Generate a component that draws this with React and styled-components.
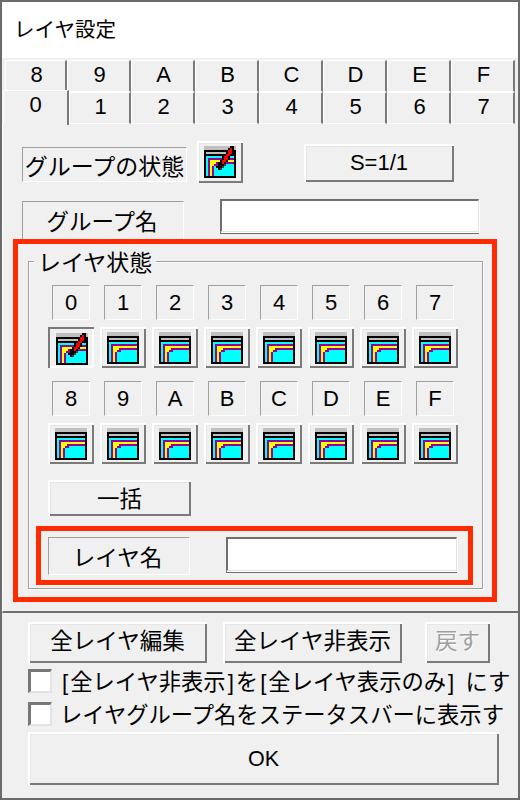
import React from "react";
import styled, { createGlobalStyle, css } from "styled-components";

const Global = createGlobalStyle`
  html, body { margin: 0; padding: 0; background: #6b6b6b; }
  * { box-sizing: border-box; }
`;

const raised = css`
  background: #f0f0f0;
  box-shadow: inset 2px 2px 0 #fff, inset -2px -2px 0 #7a7a7a, inset 3px 3px 0 #e6e6e6;
`;
const pressedEdge = css`
  background: #f0f0f0;
  box-shadow: inset 2px 2px 0 #7a7a7a, inset -2px -2px 0 #fff;
`;
const thinSunken = css`
  background: #f0f0f0;
  border-top: 1px solid #a0a0a0;
  border-left: 1px solid #a0a0a0;
  border-right: 1px solid #fff;
  border-bottom: 1px solid #fff;
`;
const centered = css`
  display: flex;
  align-items: center;
  justify-content: center;
`;

const Screen = styled.div`
  width: 520px;
  height: 800px;
  padding: 2px;
  overflow: hidden;
  font-family: "Liberation Sans", "Noto Sans CJK JP", sans-serif;
  font-size: 22.5px;
  color: #000;
  background: #6b6b6b;
`;
const Win = styled.div`
  width: 516px;
  height: 796px;
  background: #f0f0f0;
`;
const TitleBar = styled.div`
  height: 56px;
  background: #fff;
  padding: 14px 0 0 12px;
  font-size: 20.5px;
  line-height: 28px;
`;
const TabRow = styled.div`
  display: flex;
  height: 32px;
  padding-left: ${(p) => p.$indent}px;
  margin-top: ${(p) => p.$top}px;
`;
const Tab = styled.div`
  ${centered}
  position: relative;
  flex: none;
  width: ${(p) => p.$w}px;
  height: 32px;
  padding: 0 0 2px 2px;
  font-size: 22px;
  background: #f0f0f0;
  border-top: 1px solid #fff;
  border-left: 1px solid #fff;
  border-right: 2px solid #7a7a7a;
  border-bottom: 1px solid #fff;
  ${(p) =>
    p.$active &&
    css`
      z-index: 1;
      height: 35px;
      margin-top: -2px;
      padding: 0 0 6px 0;
      border-bottom: none;
    `}
`;
const Pane = styled.div`
  border-left: 1px solid #fff;
  border-bottom: 2px solid #6f6f6f;
  height: 489px;
  padding-top: 17px;
`;
const TopRow = styled.div`
  display: flex;
  align-items: flex-start;
  padding-left: 19px;
`;
const NameRow = styled(TopRow)`
  margin-top: 16px;
  height: 40px;
`;
const StateLabel = styled.div`
  ${thinSunken}
  ${centered}
  width: 165px;
  height: 35px;
  margin-top: 6px;
  white-space: nowrap;
  font-size: 23px;
`;
const GroupNameLabel = styled.div`
  ${thinSunken}
  ${centered}
  width: 162px;
  height: 38px;
  margin-top: 2px;
  padding: 0 2px 2px 0;
  border-bottom: none;
`;
const IconButton = styled.div`
  ${(p) => (p.$pressed ? pressedEdge : raised)}
  flex: none;
  width: 46px;
  height: 41px;
  padding: ${(p) => (p.$pressed ? "6px 0 0 8px" : "5px 0 0 7px")};
  svg { display: block; }
`;
const GroupIconButton = styled(IconButton)`
  margin-left: 10px;
  height: 42px;
`;
const ScaleButton = styled.div`
  ${raised}
  ${centered}
  width: 150px;
  height: 38px;
  margin: 3px 0 0 61px;
  font-size: 22px;
`;
const TextField = styled.div`
  flex: none;
  width: ${(p) => p.$w}px;
  height: ${(p) => p.$h}px;
  margin-left: 36px;
  background: #fff;
  border-top: 2px solid #6f6f6f;
  border-left: 2px solid #6f6f6f;
  border-right: 1px solid #e3e3e3;
  border-bottom: 1px solid #e3e3e3;
  box-shadow: 1px 1px 0 #fff, 0 2px 0 #6f6f6f;
`;
const RedBox = styled.div`
  border: 5px solid #ff2a00;
  width: ${(p) => p.$w}px;
`;
const OuterRed = styled(RedBox)`
  margin-left: 10px;
  height: 363px;
  padding: 17px 0 0 10px;
`;
const Field = styled.div`
  position: relative;
  width: 455px;
  height: 328px;
  padding: 23px 0 0 7px;
  border: 1px solid #a0a0a0;
  box-shadow: inset 1px 1px 0 #fff, 1px 1px 0 #fff;
`;
const Legend = styled.div`
  position: absolute;
  top: -12px;
  left: 5px;
  padding: 0 4px;
  background: #f0f0f0;
  line-height: 26px;
  font-size: 23px;
`;
const LayerGrid = styled.div`
  display: grid;
  grid-template-columns: repeat(8, 46px);
  column-gap: 6px;
  margin-left: 12px;
  & + & { margin-top: 13px; }
`;
const CellLabel = styled.div`
  ${thinSunken}
  ${centered}
  width: 38px;
  height: 35px;
  margin: 0 auto 7px;
  font-size: 22px;
`;
const BulkButton = styled.div`
  ${raised}
  ${centered}
  width: 143px;
  height: 36px;
  margin: 16px 0 0 12px;
  padding-bottom: 3px;
`;
const InnerRed = styled(RedBox)`
  display: flex;
  align-items: flex-start;
  height: 59px;
  margin-top: 10px;
  padding: 6px 0 0 7px;
`;
const LayerNameLabel = styled.div`
  ${thinSunken}
  ${centered}
  flex: none;
  width: 142px;
  height: 38px;
  padding-right: 3px;
`;
const Footer = styled.div`
  padding: 9px 0 0 26px;
`;
const ButtonRow = styled.div`
  display: flex;
  margin-bottom: 6px;
`;
const FootButton = styled.div`
  ${raised}
  ${centered}
  flex: none;
  width: ${(p) => p.$w}px;
  height: 41px;
  margin-right: ${(p) => p.$gap}px;
  padding-bottom: 8px;
  white-space: nowrap;
  ${(p) =>
    p.$disabled &&
    css`
      color: #a0a0a0;
      text-shadow: 1px 1px 0 #fff;
    `}
`;
const CheckRow = styled.div`
  display: flex;
  align-items: center;
  height: 24px;
  margin-bottom: ${(p) => p.$gap}px;
  white-space: nowrap;
  font-size: 22.3px;
  word-spacing: 3px;
`;
const CheckText = styled.span`
  margin-top: -3px;
`;
const Bracket = styled.span`
  padding: 0 2px;
`;
const CheckBox = styled.div`
  flex: none;
  width: 24px;
  height: 24px;
  margin-right: 8px;
  background: #fff;
  border-top: 3px solid #777;
  border-left: 3px solid #777;
  border-right: 2px solid #e3e3e3;
  border-bottom: 2px solid #e3e3e3;
`;
const OkButton = styled.div`
  ${raised}
  ${centered}
  width: 471px;
  height: 53px;
  padding-top: 2px;
  font-size: 21.5px;
`;

const COLORS = {
  g: "#c0c0c0",
  k: "#000",
  c: "#00ffff",
  p: "#990099",
  y: "#ffff00",
  r: "#ff0000",
  d: "#404040",
};
const BASE = [
  "gggggggggggggggg",
  "gggggggggggggggg",
  "kkkkkkkkkkkkkkkk",
  "kggggggggggggggk",
  "kkkkkkkkkkkkkkkk",
  "kcccccccccccccck",
  "kcpppppppppppppk",
  "kcpyyyyyyyyyyyyk",
  "kcpyyypppppppppk",
  "kcpyyppcccccccck",
  "kcpypcccccccccck",
  "kcpypcccccccccck",
  "kcpypcccccccccck",
  "kcpypcccccccccck",
  "kcpypcccccccccck",
  "kkkkkkkkkkkkkkkk",
];
const PEN = [
  [0, [[13, "k"], [14, "k"]]],
  [1, [[12, "k"], [13, "r"], [14, "k"]]],
  [2, [[11, "k"], [12, "r"], [13, "r"], [14, "k"]]],
  [3, [[11, "k"], [12, "r"], [13, "r"], [14, "k"]]],
  [4, [[10, "k"], [11, "r"], [12, "r"], [13, "k"]]],
  [5, [[9, "k"], [10, "r"], [11, "r"], [12, "k"]]],
  [6, [[9, "k"], [10, "r"], [11, "r"], [12, "k"]]],
  [7, [[8, "k"], [9, "r"], [10, "r"], [11, "k"]]],
  [8, [[7, "k"], [8, "k"], [9, "r"], [10, "k"]]],
  [9, [[7, "k"], [8, "k"], [9, "k"], [10, "d"]]],
  [10, [[6, "k"], [7, "k"], [8, "k"], [9, "d"]]],
  [11, [[7, "k"], [8, "d"]]],
];

function LayerIcon({ pen }) {
  const grid = BASE.map((r) => r.split(""));
  if (pen) PEN.forEach(([y, cells]) => cells.forEach(([x, c]) => (grid[y][x] = c)));
  return (
    <svg width="32" height="32" viewBox="0 0 16 16" shapeRendering="crispEdges">
      {grid.flatMap((row, y) =>
        row.map((c, x) => <rect key={`${x}-${y}`} x={x} y={y} width="1" height="1" fill={COLORS[c]} />)
      )}
    </svg>
  );
}

const ROW1 = "89ABCDEF".split("");
const ROW2 = "01234567".split("");

function LayerRow({ ids }) {
  return (
    <LayerGrid>
      {ids.map((id) => (
        <div key={id}>
          <CellLabel>{id}</CellLabel>
          <IconButton $pressed={id === "0"}>
            <LayerIcon pen={id === "0"} />
          </IconButton>
        </div>
      ))}
    </LayerGrid>
  );
}

export default function App() {
  return (
    <Screen>
      <Global />
      <Win>
        <TitleBar>レイヤ設定</TitleBar>
        <TabRow $indent={3} $top={2}>
          {ROW1.map((t, i) => (
            <Tab key={t} $w={i === 0 ? 62 : 64}>{t}</Tab>
          ))}
        </TabRow>
        <TabRow $indent={1} $top={0}>
          {ROW2.map((t, i) => (
            <Tab key={t} $active={i === 0} $w={i === 0 ? 66 : i === 1 ? 62 : 64}>{t}</Tab>
          ))}
        </TabRow>
        <Pane>
          <TopRow>
            <StateLabel>グループの状態</StateLabel>
            <GroupIconButton>
              <LayerIcon pen />
            </GroupIconButton>
            <ScaleButton>S=1/1</ScaleButton>
          </TopRow>
          <NameRow>
            <GroupNameLabel>グループ名</GroupNameLabel>
            <TextField $w={259} $h={33} />
          </NameRow>
          <OuterRed $w={484}>
            <Field>
              <Legend>レイヤ状態</Legend>
              <LayerRow ids={ROW2} />
              <LayerRow ids={ROW1} />
              <BulkButton>一括</BulkButton>
              <InnerRed $w={437}>
                <LayerNameLabel>レイヤ名</LayerNameLabel>
                <TextField $w={231} $h={34} />
              </InnerRed>
            </Field>
          </OuterRed>
        </Pane>
        <Footer>
          <ButtonRow>
            <FootButton $w={179} $gap={16}>全レイヤ編集</FootButton>
            <FootButton $w={179} $gap={23}>全レイヤ非表示</FootButton>
            <FootButton $w={65} $gap={0} $disabled>戻す</FootButton>
          </ButtonRow>
          <CheckRow $gap={9}>
            <CheckBox />
            <CheckText>
              <Bracket>[</Bracket>全レイヤ非表示<Bracket>]</Bracket>を<Bracket>[</Bracket>全レイヤ表示のみ<Bracket>]</Bracket> にす
            </CheckText>
          </CheckRow>
          <CheckRow $gap={6}>
            <CheckBox />
            <CheckText>レイヤグループ名をステータスバーに表示す</CheckText>
          </CheckRow>
          <OkButton>OK</OkButton>
        </Footer>
      </Win>
    </Screen>
  );
}
